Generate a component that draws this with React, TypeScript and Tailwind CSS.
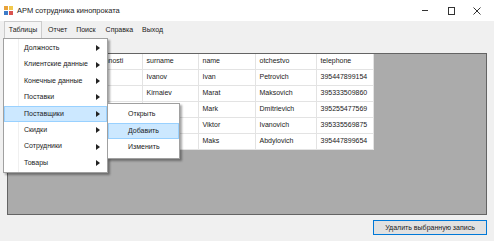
import React from 'react';

const rows = [
  { surname: 'Ivanov', name: 'Ivan', otchestvo: 'Petrovich', telephone: '395447899154' },
  { surname: 'Kirnaiev', name: 'Marat', otchestvo: 'Maksovich', telephone: '395333509860' },
  { surname: '', name: 'Mark', otchestvo: 'Dmitrievich', telephone: '395255477569' },
  { surname: '', name: 'Viktor', otchestvo: 'Ivanovich', telephone: '395335569875' },
  { surname: '', name: 'Maks', otchestvo: 'Abdylovich', telephone: '395447899654' },
];

const menuItems = [
  'Должность',
  'Клиентские данные',
  'Конечные данные',
  'Поставки',
  'Поставщики',
  'Скидки',
  'Сотрудники',
  'Товары',
];

const subItems = ['Открыть', 'Добавить', 'Изменить'];

function Arrow() {
  return (
    <svg width="4" height="6" viewBox="0 0 4 6" className="shrink-0">
      <path d="M0 0 L4 3 L0 6 Z" fill="#222" />
    </svg>
  );
}

export default function App() {
  const cell = 'border-r border-b border-[#e3e3e3] px-[4px] text-left font-normal whitespace-nowrap overflow-hidden';
  return (
    <div
      className="relative w-[494px] h-[241px] overflow-hidden bg-[#f0f0f0] text-[7px] text-[#1a1a1a] whitespace-nowrap"
      style={{ fontFamily: '"Liberation Sans", Arial, sans-serif' }}
    >
      {/* Title bar */}
      <div className="h-[21px] bg-white flex items-center">
        <svg width="9" height="9" viewBox="0 0 9 9" className="ml-[4px]">
          <rect x="0" y="0" width="4" height="4" fill="#e8a23a" />
          <rect x="5" y="0" width="4" height="4" fill="#f2c94c" />
          <rect x="0" y="5" width="4" height="4" fill="#3d7cc9" />
          <rect x="5" y="5" width="4" height="4" fill="#d9534f" />
        </svg>
        <span className="ml-[4px] text-[7.5px]">АРМ сотрудника кинопроката</span>
        <div className="ml-auto flex items-center text-[#222] mr-[4px]">
          <div className="w-[26px] flex justify-center">
            <div className="w-[6px] h-px bg-[#333]" />
          </div>
          <div className="w-[26px] flex justify-center">
            <div className="w-[7px] h-[8px] border border-[#333]" />
          </div>
          <div className="w-[26px] flex justify-center">
            <svg width="8" height="8" viewBox="0 0 8 8">
              <path d="M0.5 0.5 L7.5 7.5 M7.5 0.5 L0.5 7.5" stroke="#333" strokeWidth="1" />
            </svg>
          </div>
        </div>
      </div>

      {/* Menu bar */}
      <div className="h-[18px] flex items-stretch pl-[4px]">
        <div className="flex items-center w-[38px] justify-center border border-b-0 border-[#cccccc] bg-[#f5f5f5]">Таблицы</div>
        <div className="flex items-center ml-[6px]">Отчет</div>
        <div className="flex items-center ml-[9px]">Поиск</div>
        <div className="flex items-center ml-[10px]">Справка</div>
        <div className="flex items-center ml-[9px]">Выход</div>
      </div>

      {/* Data grid */}
      <div className="mt-[14px] mx-[7px] h-[162px] border border-[#646464] bg-[#ababab]">
        <table className="border-collapse bg-white table-fixed">
          <thead>
            <tr className="h-[15px]">
              <th className={`${cell} w-[70px]`}></th>
              <th className={`${cell} w-[64px]`}>id_dolzhnosti</th>
              <th className={`${cell} w-[56px]`}>surname</th>
              <th className={`${cell} w-[57px]`}>name</th>
              <th className={`${cell} w-[61px]`}>otchestvo</th>
              <th className={`${cell} w-[57px]`}>telephone</th>
            </tr>
          </thead>
          <tbody>
            {rows.map((r, i) => (
              <tr key={i} className="h-[16px]">
                <td className={cell}></td>
                <td className={cell}></td>
                <td className={cell}>{r.surname}</td>
                <td className={cell}>{r.name}</td>
                <td className={cell}>{r.otchestvo}</td>
                <td className={cell}>{r.telephone}</td>
              </tr>
            ))}
          </tbody>
        </table>
      </div>

      {/* Bottom button */}
      <div className="flex justify-end pr-[7px] pt-[5px]">
        <button className="w-[114px] h-[15px] bg-[#e1e1e1] border border-[#0078d7] leading-none">
          Удалить выбранную запись
        </button>
      </div>

      {/* Dropdown menu */}
      <div className="absolute left-[3px] top-[38px] w-[105px] bg-white border border-[#a0a0a0] shadow-[2px_2px_2px_rgba(0,0,0,0.35)] py-[1px]">
        <div className="absolute left-[14px] top-0 bottom-0 w-px bg-[#f0f0f0]" />
        {menuItems.map((m) => (
          <div
            key={m}
            className={`relative h-[16.4px] flex items-center pl-[19px] pr-[6px] border ${
              m === 'Поставщики' ? 'bg-[#cce8ff] border-[#99d1ff]' : 'border-transparent'
            }`}
          >
            <span className="flex-1">{m}</span>
            <Arrow />
          </div>
        ))}
      </div>

      {/* Submenu */}
      <div className="absolute left-[107px] top-[103px] w-[73px] bg-white border border-[#a0a0a0] shadow-[2px_2px_2px_rgba(0,0,0,0.35)] py-[2px]">
        {subItems.map((s) => (
          <div
            key={s}
            className={`h-[16.5px] flex items-center pl-[19px] border ${
              s === 'Добавить' ? 'bg-[#cce8ff] border-[#99d1ff]' : 'border-transparent'
            }`}
          >
            {s}
          </div>
        ))}
      </div>
    </div>
  );
}
